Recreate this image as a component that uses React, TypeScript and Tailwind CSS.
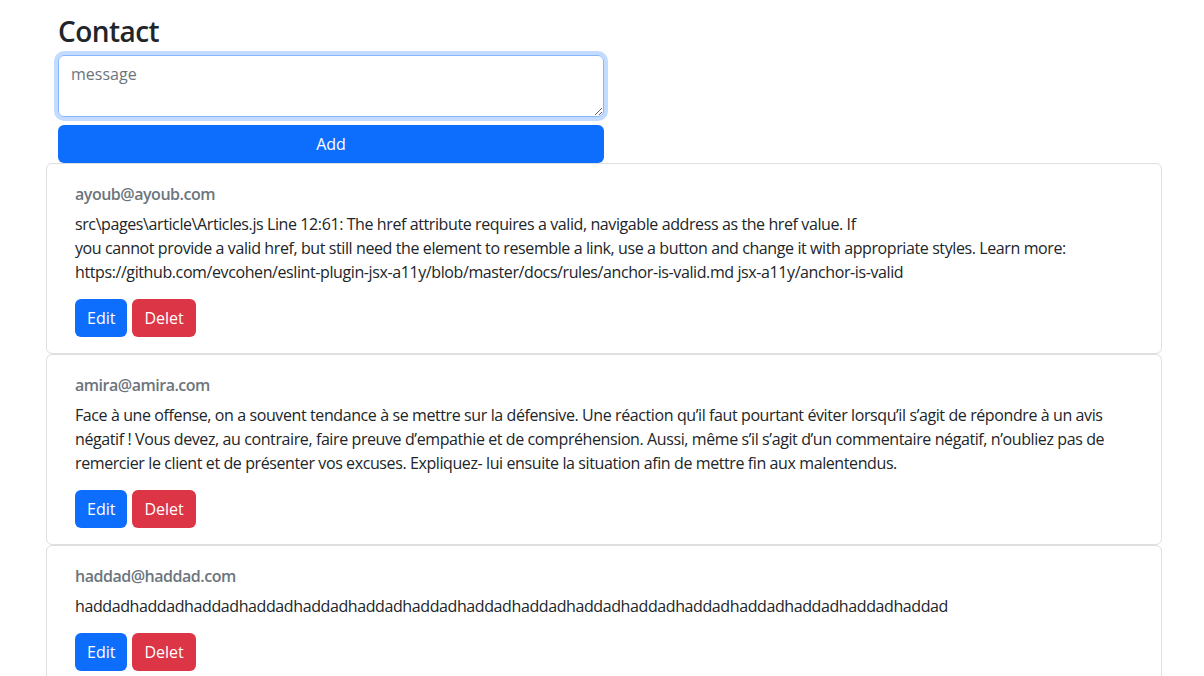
import React from 'react';

type Contact = {
  email: string;
  lines: string[];
};

const contacts: Contact[] = [
  {
    email: 'ayoub@ayoub.com',
    lines: [
      'src\\pages\\article\\Articles.js Line 12:61: The href attribute requires a valid, navigable address as the href value. If',
      'you cannot provide a valid href, but still need the element to resemble a link, use a button and change it with appropriate styles. Learn more:',
      'https://github.com/evcohen/eslint-plugin-jsx-a11y/blob/master/docs/rules/anchor-is-valid.md jsx-a11y/anchor-is-valid',
    ],
  },
  {
    email: 'amira@amira.com',
    lines: [
      'Face à une offense, on a souvent tendance à se mettre sur la défensive. Une réaction qu’il faut pourtant éviter lorsqu’il s’agit de répondre à un avis',
      'négatif ! Vous devez, au contraire, faire preuve d’empathie et de compréhension. Aussi, même s’il s’agit d’un commentaire négatif, n’oubliez pas de',
      'remercier le client et de présenter vos excuses. Expliquez- lui ensuite la situation afin de mettre fin aux malentendus.',
    ],
  },
  {
    email: 'haddad@haddad.com',
    lines: ['haddad'.repeat(16)],
  },
];

function ContactCard({ contact }: { contact: Contact }) {
  return (
    <div className="rounded-[6px] border border-[#dfdfdf] bg-white">
      <div className="px-[28px] pb-4 pt-[21px]">
        <h6 className="mb-2 text-base font-semibold leading-[1.2] tracking-[-0.03em] text-[#6c757d]">
          {contact.email}
        </h6>
        <p className="mb-[15px] whitespace-nowrap text-base leading-6 tracking-[-0.025em]">
          {contact.lines.map((line, i) => (
            <React.Fragment key={i}>
              {i > 0 && <br />}
              {line}
            </React.Fragment>
          ))}
        </p>
        <div className="flex gap-[5px]">
          <button className="h-[38px] rounded-[6px] bg-[#0d6efd] px-3 text-base text-white">Edit</button>
          <button className="h-[38px] rounded-[6px] bg-[#dc3545] px-3 text-base text-white">Delet</button>
        </div>
      </div>
    </div>
  );
}

export default function App() {
  return (
    <div className="min-h-screen bg-white font-['Open_Sans',sans-serif] text-[#212529]">
      <div className="w-[1162px] pl-[46px]">
        <div className="w-[570px] px-3 pt-[15px]">
          <h3 className="mb-1.5 text-[28px] font-semibold leading-[1.2] tracking-[-0.02em]">Contact</h3>
          <textarea
            placeholder="message"
            rows={2}
            className="block h-[62px] w-full resize-y rounded-[6px] border border-[#86b7fe] px-3 py-1.5 text-base leading-6 shadow-[0_0_0_4px_rgba(13,110,253,0.25)] outline-none placeholder:text-[#6c757d]"
          />
          <button className="mt-2 block h-[38px] w-full rounded-[6px] bg-[#0d6efd] text-base text-white">Add</button>
        </div>
        <div className="flex flex-col">
          {contacts.map((c) => (
            <ContactCard key={c.email} contact={c} />
          ))}
        </div>
      </div>
    </div>
  );
}
